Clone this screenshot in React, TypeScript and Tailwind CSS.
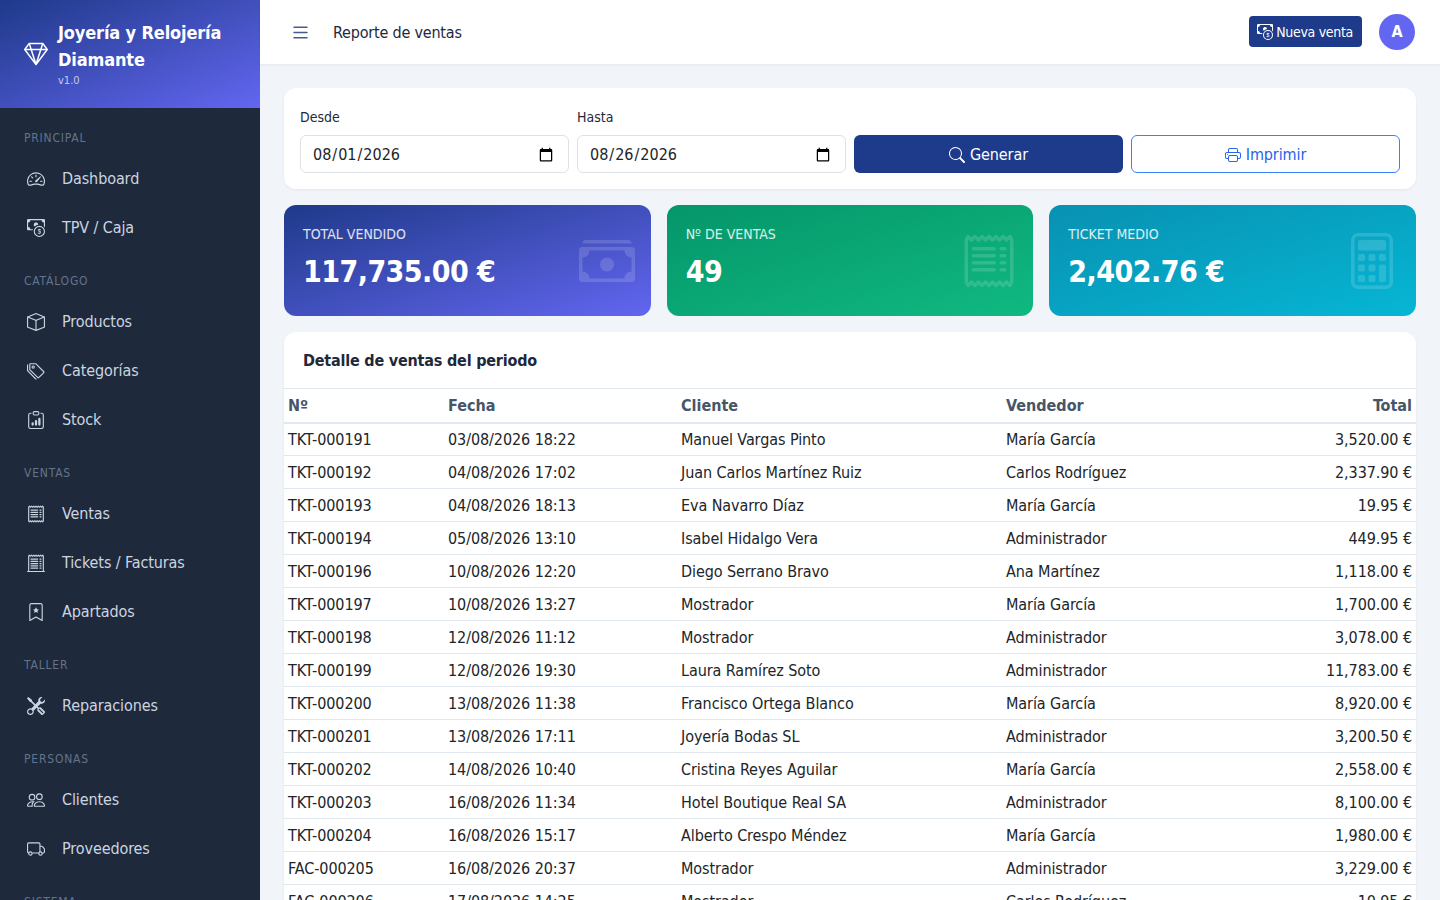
import {
  BsBox,
  BsCalculator,
  BsCashCoin,
  BsCashStack,
  BsClipboardData,
  BsBookmarkStar,
  BsGem,
  BsList,
  BsPeople,
  BsPrinter,
  BsReceipt,
  BsReceiptCutoff,
  BsSearch,
  BsSpeedometer2,
  BsTags,
  BsTools,
  BsTruck
} from 'react-icons/bs';
import type { IconType } from 'react-icons';

interface NavSection {
  title: string;
  items: { label: string; icon: IconType }[];
}

const sections: NavSection[] = [
  {
    title: 'PRINCIPAL',
    items: [
      { label: 'Dashboard', icon: BsSpeedometer2 },
      { label: 'TPV / Caja', icon: BsCashCoin }
    ]
  },
  {
    title: 'CATÁLOGO',
    items: [
      { label: 'Productos', icon: BsBox },
      { label: 'Categorías', icon: BsTags },
      { label: 'Stock', icon: BsClipboardData }
    ]
  },
  {
    title: 'VENTAS',
    items: [
      { label: 'Ventas', icon: BsReceipt },
      { label: 'Tickets / Facturas', icon: BsReceiptCutoff },
      { label: 'Apartados', icon: BsBookmarkStar }
    ]
  },
  {
    title: 'TALLER',
    items: [{ label: 'Reparaciones', icon: BsTools }]
  },
  {
    title: 'PERSONAS',
    items: [
      { label: 'Clientes', icon: BsPeople },
      { label: 'Proveedores', icon: BsTruck }
    ]
  },
  { title: 'SISTEMA', items: [] }
];

const sales = [
  ['TKT-000191', '03/08/2026 18:22', 'Manuel Vargas Pinto', 'María García', '3,520.00 €'],
  ['TKT-000192', '04/08/2026 17:02', 'Juan Carlos Martínez Ruiz', 'Carlos Rodríguez', '2,337.90 €'],
  ['TKT-000193', '04/08/2026 18:13', 'Eva Navarro Díaz', 'María García', '19.95 €'],
  ['TKT-000194', '05/08/2026 13:10', 'Isabel Hidalgo Vera', 'Administrador', '449.95 €'],
  ['TKT-000196', '10/08/2026 12:20', 'Diego Serrano Bravo', 'Ana Martínez', '1,118.00 €'],
  ['TKT-000197', '10/08/2026 13:27', 'Mostrador', 'María García', '1,700.00 €'],
  ['TKT-000198', '12/08/2026 11:12', 'Mostrador', 'Administrador', '3,078.00 €'],
  ['TKT-000199', '12/08/2026 19:30', 'Laura Ramírez Soto', 'Administrador', '11,783.00 €'],
  ['TKT-000200', '13/08/2026 11:38', 'Francisco Ortega Blanco', 'María García', '8,920.00 €'],
  ['TKT-000201', '13/08/2026 17:11', 'Joyería Bodas SL', 'Administrador', '3,200.50 €'],
  ['TKT-000202', '14/08/2026 10:40', 'Cristina Reyes Aguilar', 'María García', '2,558.00 €'],
  ['TKT-000203', '16/08/2026 11:34', 'Hotel Boutique Real SA', 'Administrador', '8,100.00 €'],
  ['TKT-000204', '16/08/2026 15:17', 'Alberto Crespo Méndez', 'María García', '1,980.00 €'],
  ['FAC-000205', '16/08/2026 20:37', 'Mostrador', 'Administrador', '3,229.00 €'],
  ['FAC-000206', '17/08/2026 14:25', 'Mostrador', 'Carlos Rodríguez', '10.95 €']
];

function Sidebar() {
  return (
    <aside className="w-[260px] h-[900px] shrink-0 overflow-hidden bg-[#1e293b]">
      <div className="h-[108px] flex items-center gap-[10px] pl-[24px] bg-gradient-to-br from-[#1e3a8a] to-[#6366f1]">
        <BsGem className="w-[24px] h-[24px] text-white shrink-0" />
        <div>
          <div className="text-[18px] leading-[27px] font-bold tracking-[-0.15px] text-white">
            Joyería y Relojería Diamante
          </div>
          <div className="text-[11px] leading-[16px] text-white/70">v1.0</div>
        </div>
      </div>

      <nav className="pt-[17px]">
        {sections.map((section) => (
          <div key={section.title} className="mb-[16px]">
            <div className="h-[25px] mb-[4px] px-[24px] flex items-center text-[12px] tracking-[0.8px] text-[#64748b]">
              {section.title}
            </div>
            {section.items.map((item) => (
              <div
                key={item.label}
                className="h-[49px] pl-[27px] flex items-center gap-[17px] text-[#cbd5e1] text-[16px] tracking-[-0.1px]"
              >
                <item.icon className="w-[18px] h-[18px] shrink-0" />
                <span>{item.label}</span>
              </div>
            ))}
          </div>
        ))}
      </nav>
    </aside>
  );
}

function StatCard({
  label,
  value,
  icon: Icon,
  gradient
}: {
  label: string;
  value: string;
  icon: IconType;
  gradient: string;
}) {
  return (
    <div className={`relative h-[111px] rounded-xl px-[19px] pt-[20px] text-white ${gradient}`}>
      <div className="text-[14px] leading-[18px] text-white/85">{label}</div>
      <div className="mt-[9px] text-[30px] leading-[40px] font-bold tracking-[-0.55px]">{value}</div>
      <Icon className="absolute right-[16px] top-1/2 -translate-y-1/2 w-[56px] h-[56px] text-white/15" />
    </div>
  );
}

export default function App() {
  return (
    <div className="flex h-[900px] overflow-hidden bg-[#f1f5f9] font-['DejaVu_Sans',Verdana,sans-serif] font-stretch-condensed">
      <Sidebar />

      <div className="flex-1 min-w-0">
        {/* Header */}
        <header className="h-[64px] bg-white shadow-[0_1px_3px_rgba(0,0,0,0.06)] flex items-center justify-between pl-[30px] pr-[25px]">
          <div className="flex items-center gap-[22px]">
            <BsList className="w-[21px] h-[21px] text-[#475a8c]" />
            <h1 className="pt-[2px] text-[16px] tracking-[-0.2px] text-[#1e293b]">Reporte de ventas</h1>
          </div>
          <div className="flex items-center gap-[17px]">
            <button className="h-[31px] mb-[1px] pl-[8px] pr-[9px] pt-[1px] rounded bg-[#1e3a8a] text-white text-[14px] tracking-[-0.3px] flex items-center gap-[3px]">
              <BsCashCoin className="w-[16px] h-[16px]" />
              Nueva venta
            </button>
            <div className="w-[36px] h-[36px] rounded-full bg-[#6366f1] text-white font-bold flex items-center justify-center">
              A
            </div>
          </div>
        </header>

        <main className="p-[24px]">
          {/* Filtros */}
          <div className="bg-white rounded-xl shadow-[0_1px_3px_rgba(0,0,0,0.06)] p-[16px] grid grid-cols-4 gap-[8px] items-end">
            <label className="block">
              <span className="block mb-[5px] text-[14px] leading-[26px] text-[#1e293b]">Desde</span>
              <input
                type="date"
                defaultValue="2026-08-01"
                className="w-full h-[38px] pl-[11px] pr-[12px] pt-[2px] rounded-md border border-[#dee2e6] text-[16px] text-[#212529]"
              />
            </label>
            <label className="block">
              <span className="block mb-[5px] text-[14px] leading-[26px] text-[#1e293b]">Hasta</span>
              <input
                type="date"
                defaultValue="2026-08-26"
                className="w-full h-[38px] pl-[11px] pr-[12px] pt-[2px] rounded-md border border-[#dee2e6] text-[16px] text-[#212529]"
              />
            </label>
            <button className="h-[38px] pt-[2px] rounded-md bg-[#1e3a8a] text-white text-[16px] tracking-[-0.1px] flex items-center justify-center gap-[5px]">
              <BsSearch className="w-[16px] h-[16px]" />
              Generar
            </button>
            <button className="h-[38px] pt-[2px] rounded-md border border-[#3b82f6] text-[#2563eb] text-[16px] tracking-[-0.1px] flex items-center justify-center gap-[5px]">
              <BsPrinter className="w-[16px] h-[16px]" />
              Imprimir
            </button>
          </div>

          {/* Totales */}
          <div className="grid grid-cols-3 gap-[16px] mt-[16px]">
            <StatCard
              label="TOTAL VENDIDO"
              value="117,735.00 €"
              icon={BsCashStack}
              gradient="bg-gradient-to-br from-[#1e3a8a] to-[#6366f1]"
            />
            <StatCard
              label="Nº DE VENTAS"
              value="49"
              icon={BsReceipt}
              gradient="bg-gradient-to-br from-[#059669] to-[#10b981]"
            />
            <StatCard
              label="TICKET MEDIO"
              value="2,402.76 €"
              icon={BsCalculator}
              gradient="bg-gradient-to-br from-[#0891b2] to-[#06b6d4]"
            />
          </div>

          {/* Detalle */}
          <div className="bg-white rounded-xl shadow-[0_1px_3px_rgba(0,0,0,0.06)] mt-[16px]">
            <h2 className="h-[56px] px-[19px] pt-[2px] flex items-center text-[16px] font-bold tracking-[-0.2px] text-[#1e293b]">
              Detalle de ventas del periodo
            </h2>
            <table className="w-full table-fixed text-[16px] text-[#212529]">
              <thead>
                <tr className="h-[34px] border-y border-[#e2e8f0] border-b-2 text-[#475569]">
                  <th className="w-[160px] px-[4px] pt-[2px] text-left font-bold">Nº</th>
                  <th className="w-[233px] px-[4px] pt-[2px] text-left font-bold">Fecha</th>
                  <th className="w-[325px] px-[4px] pt-[2px] text-left font-bold">Cliente</th>
                  <th className="w-[220px] px-[4px] pt-[2px] text-left font-bold">Vendedor</th>
                  <th className="px-[4px] pt-[2px] text-right font-bold">Total</th>
                </tr>
              </thead>
              <tbody className="tracking-[-0.08px]">
                {sales.map((row) => (
                  <tr key={row[0]} className="h-[33px] border-b border-[#e2e8f0]">
                    <td className="px-[4px] pt-[2px]">{row[0]}</td>
                    <td className="px-[4px] pt-[2px]">{row[1]}</td>
                    <td className="px-[4px] pt-[2px]">{row[2]}</td>
                    <td className="px-[4px] pt-[2px]">{row[3]}</td>
                    <td className="px-[4px] pt-[2px] text-right">{row[4]}</td>
                  </tr>
                ))}
              </tbody>
            </table>
          </div>
        </main>
      </div>
    </div>
  );
}
